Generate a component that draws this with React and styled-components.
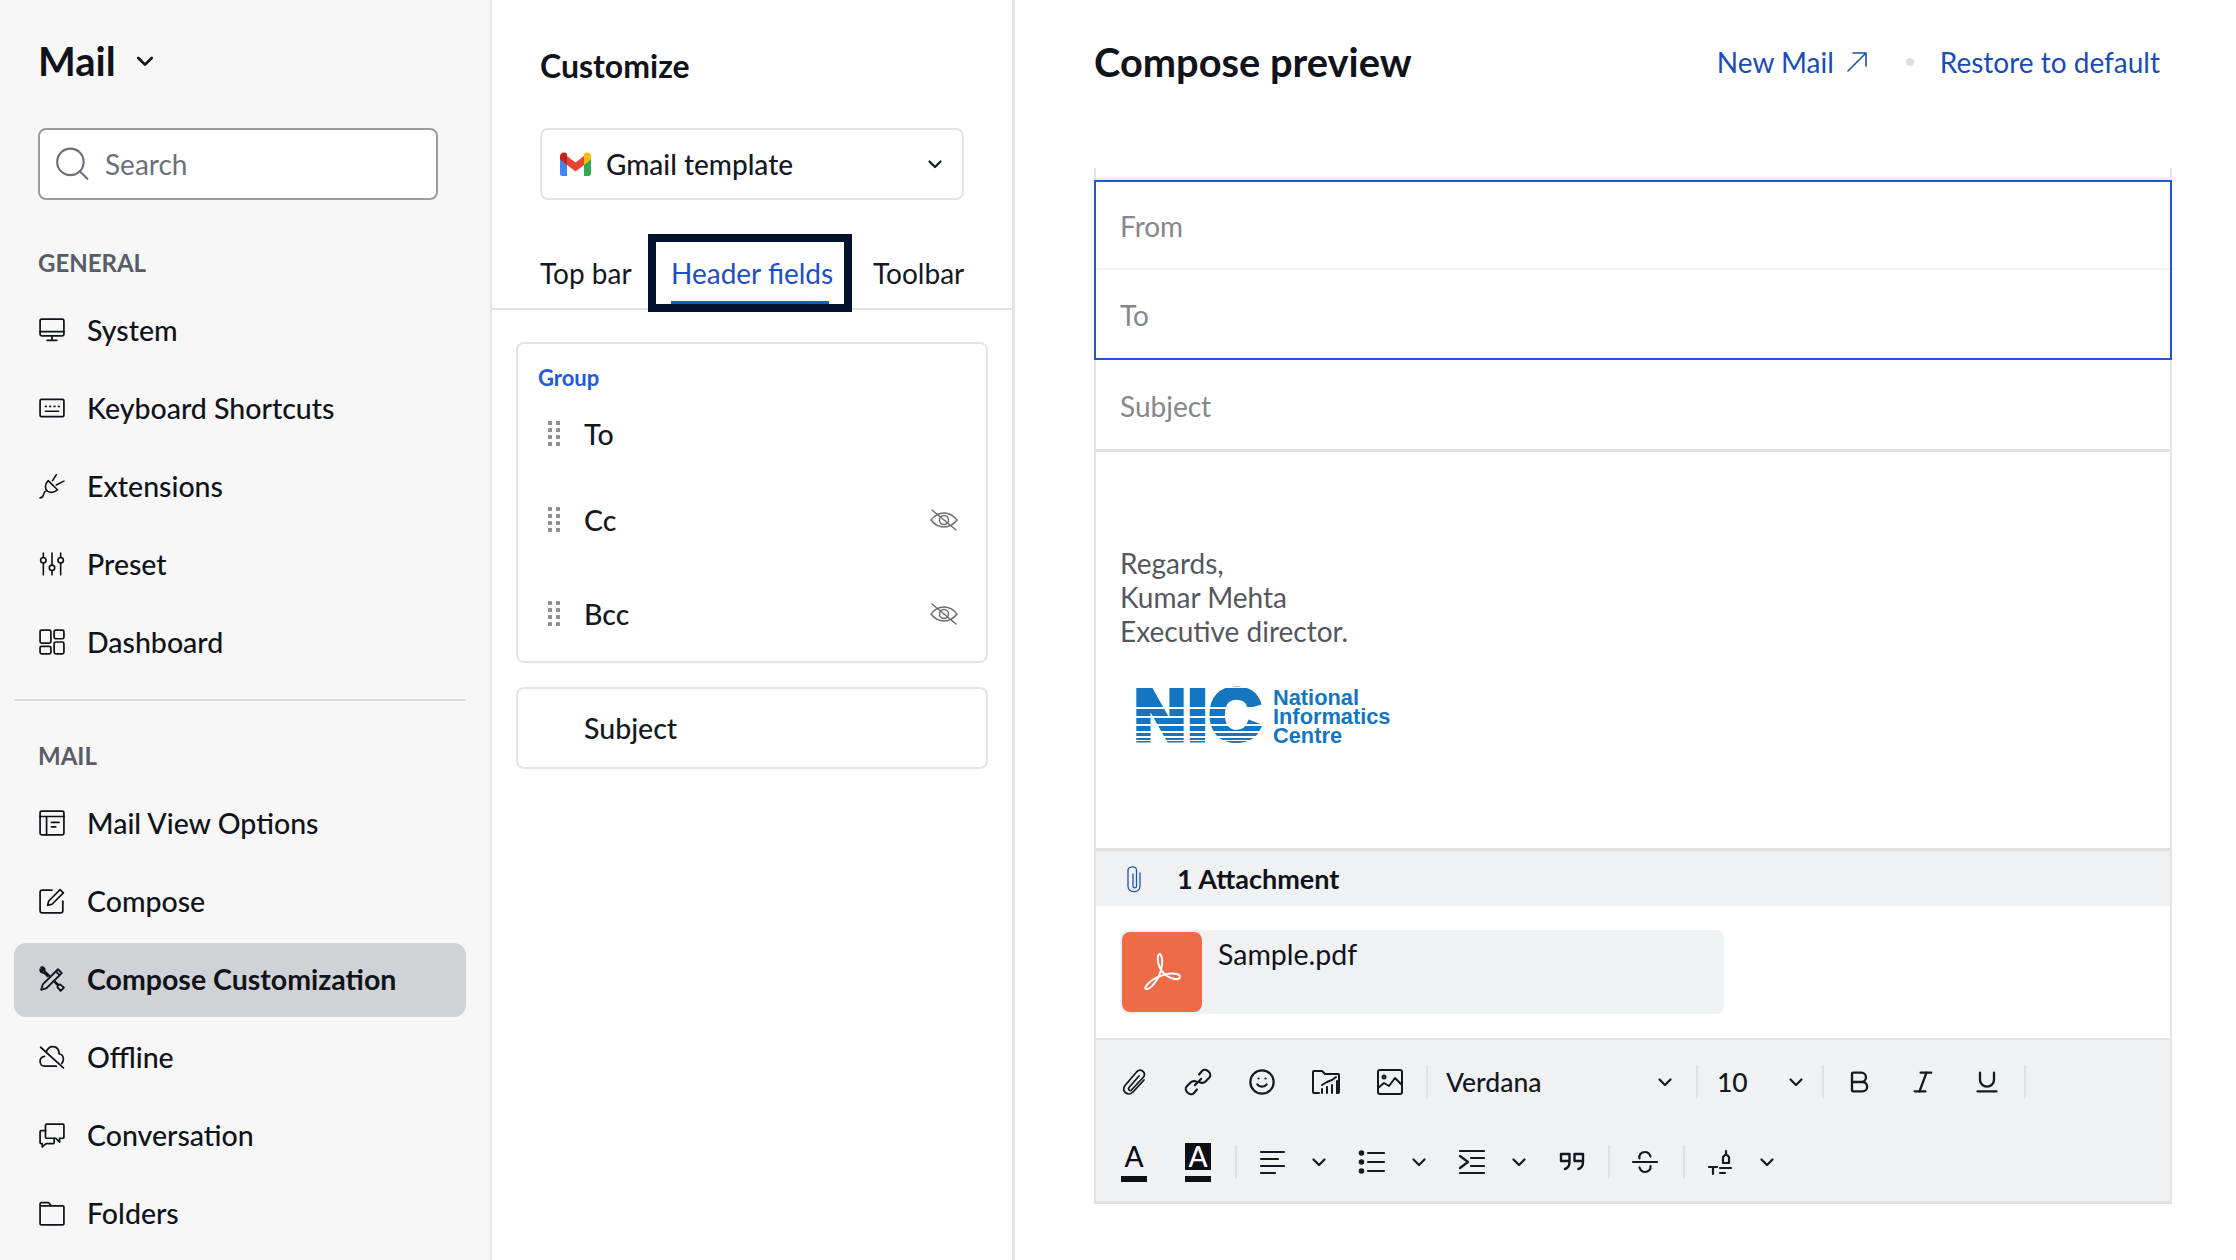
import React from 'react'
import styled, { createGlobalStyle } from 'styled-components'
import { Bold, Italic, Underline, Smile } from 'lucide-react'

const GlobalStyle = createGlobalStyle`
  html, body { margin: 0; padding: 0; background: #fff; }
  body { font-family: Lato, "Liberation Sans", sans-serif; color: #111318; }
  * { box-sizing: border-box; }
`

const Page = styled.div`
  display: flex;
  width: 2236px;
  height: 1260px;
  overflow: hidden;
`

/* ---------- sidebar ---------- */
const Sidebar = styled.aside`
  width: 492px;
  flex: none;
  background: #f7f7f7;
  border-right: 2px solid #e6e6e6;
`
const SideHead = styled.div`
  height: 128px;
  padding: 0 0 6px 38px;
  display: flex;
  align-items: center;
  gap: 18px;
`
const SideTitle = styled.h1`
  margin: 0;
  font-size: 40px;
  font-weight: 700;
  color: #10131a;
`
const SearchBox = styled.div`
  margin-left: 38px;
  width: 400px;
  height: 72px;
  background: #fff;
  border: 2px solid #9a9ca3;
  border-radius: 8px;
  display: flex;
  align-items: center;
  padding-left: 14px;
  gap: 15px;
  font-size: 28px;
  color: #6d7078;
`
const GroupLabel = styled.div`
  height: 30px;
  line-height: 30px;
  margin: ${p => p.$top}px 0 ${p => p.$bottom}px 38px;
  font-size: 24px;
  font-weight: 700;
  color: #585c66;
`
const NavList = styled.nav`
  display: flex;
  flex-direction: column;
  gap: 4px;
`
const NavItem = styled.div`
  height: 74px;
  margin: 0 24px 0 14px;
  padding: 0 0 2px 25px;
  display: flex;
  align-items: center;
  gap: 22px;
  border-radius: 12px;
  font-size: 28.5px;
  font-weight: ${p => (p.$active ? 700 : 500)};
  background: ${p => (p.$active ? '#d1d2d6' : 'transparent')};
  color: #10131a;
`
const SideRule = styled.hr`
  margin: 19px 24px 0 14px;
  border: 0;
  height: 2px;
  background: #dedede;
`

/* ---------- customize column ---------- */
const Customize = styled.section`
  width: 523px;
  flex: none;
  border-right: 3px solid #e4e4e4;
`
const CustomizeTitle = styled.h2`
  margin: 0;
  height: 128px;
  padding: 0 0 0 48px;
  line-height: 132px;
  font-size: 32px;
  font-weight: 700;
  color: #10131a;
`
const TemplateSelect = styled.div`
  margin-left: 48px;
  width: 424px;
  height: 72px;
  border: 2px solid #e4e4e4;
  border-radius: 8px;
  display: flex;
  align-items: center;
  padding: 0 18px;
  gap: 15px;
  font-size: 28px;
  font-weight: 500;
  color: #15181f;
`
const Grow = styled.span`
  flex: 1;
`
const TabBar = styled.div`
  margin-top: 34px;
  height: 76px;
  padding-left: 48px;
  display: flex;
  align-items: flex-start;
  border-bottom: 2px solid #e2e2e2;
`
const PlainTab = styled.div`
  height: 74px;
  width: ${p => p.$w}px;
  flex: none;
  margin-left: ${p => p.$left || 0}px;
  line-height: 78px;
  font-size: 28px;
  white-space: nowrap;
  color: #15181f;
`
const FocusedTab = styled.div`
  height: 78px;
  width: 204px;
  flex: none;
  margin-left: 17px;
  border: 8px solid #03122f;
  padding: 0 15px;
  background: #fff;
  position: relative;
  z-index: 1;
`
const FocusedLabel = styled.div`
  height: 62px;
  line-height: 62px;
  font-size: 28px;
  white-space: nowrap;
  color: #1d4fc4;
  border-bottom: 3px solid #1d56d8;
`
const FieldCard = styled.div`
  margin: ${p => p.$top}px 0 0 24px;
  width: 472px;
  height: ${p => p.$height}px;
  border: 2px solid #e4e4e4;
  border-radius: 8px;
  padding: ${p => (p.$group ? '20px 20px 0' : '0 0 0 66px')};
  display: ${p => (p.$group ? 'block' : 'flex')};
  align-items: center;
  font-size: 28.5px;
  font-weight: 500;
  color: #15181f;
`
const CardLabel = styled.div`
  height: 28px;
  line-height: 28px;
  font-size: 22px;
  font-weight: 700;
  color: #1d5bd8;
`
const FieldRow = styled.div`
  height: 60px;
  margin-top: ${p => p.$top}px;
  padding: 0 8px 2px 10px;
  display: flex;
  align-items: center;
  gap: 24px;
`

/* ---------- preview column ---------- */
const Preview = styled.main`
  flex: 1;
  padding-left: 79px;
`
const PreviewHead = styled.header`
  height: 168px;
  width: 1066px;
  padding-bottom: 46px;
  display: flex;
  align-items: center;
`
const PreviewTitle = styled.h2`
  margin: 0;
  flex: 1;
  font-size: 39.8px;
  font-weight: 700;
  color: #10131a;
`
const HeadLink = styled.a`
  display: flex;
  align-items: center;
  gap: 12px;
  padding-top: 2px;
  font-size: 28px;
  color: #1a4cb8;
`
const HeadDot = styled.span`
  width: 8px;
  height: 8px;
  margin: 2px 26px 0 38px;
  border-radius: 50%;
  background: #dcdde0;
`
const ComposeFrame = styled.div`
  width: 1078px;
  border-right: 2px solid #e4e4e4;
  border-left: 2px solid #e4e4e4;
  border-bottom: 3px solid #e2e2e2;
`
const FrameStub = styled.div`
  height: 12px;
  margin: 0 -2px;
  border-bottom: 2px solid #ececec;
`
const FocusBox = styled.div`
  margin: 0 -2px;
  height: 180px;
  border: 2px solid #1e55d8;
`
const ComposeRow = styled.div`
  height: ${p => p.$height}px;
  padding: 2px 0 0 24px;
  display: flex;
  align-items: center;
  font-size: 28px;
  color: #85878c;
  border-bottom: ${p => p.$rule || 'none'};
`
const BodyArea = styled.div`
  height: 396px;
  padding: 94px 0 0 24px;
`
const Signature = styled.div`
  font-size: 28px;
  line-height: 34px;
  color: #54575e;
`
const LogoWrap = styled.div`
  margin: 39px 0 0 14px;
  display: flex;
  align-items: flex-start;
  gap: 9px;
  color: #1475c1;
`
const NicMark = styled.div`
  position: relative;
  width: 130px;
  height: 57px;
  font-family: "Liberation Sans", sans-serif;
  font-weight: 700;
  font-size: 72px;
  letter-spacing: 1.5px;
  line-height: 57px;
  color: #1475c1;
  -webkit-text-stroke: 5px #1475c1;
  white-space: nowrap;
  /* white bands over the letters, getting closer towards the bottom */
  &::after {
    content: '';
    position: absolute;
    inset: 0 -4px -2px -4px;
    background: linear-gradient(
      #fff 0 1px, transparent 1px 20px, #fff 20px 22px,
      transparent 22px 29px, #fff 29px 31px,
      transparent 31px 37px, #fff 37px 39px,
      transparent 39px 44px, #fff 44px 46px,
      transparent 46px 49px, #fff 49px 51px,
      transparent 51px 53px, #fff 53px 54px,
      transparent 54px 57px, #fff 57px
    );
  }
`
const LogoText = styled.div`
  font-family: "Liberation Sans", sans-serif;
  font-weight: 700;
  font-size: 21.8px;
  line-height: 19px;
  padding-top: 1px;
`
const AttachBar = styled.div`
  height: 58px;
  border-top: 3px solid #e0e0e0;
  background: #f0f1f3;
  padding-left: 30px;
  display: flex;
  align-items: center;
  gap: 35px;
  font-size: 27px;
  font-weight: 700;
  color: #10131a;
`
const AttachArea = styled.div`
  height: 134px;
  padding: 24px 0 0 24px;
  border-bottom: 2px solid #e4e4e4;
`
const FileCard = styled.div`
  width: 604px;
  height: 84px;
  padding: 2px;
  display: flex;
  gap: 16px;
  background: #f0f1f3;
  border-radius: 8px;
  font-size: 28.5px;
  line-height: 44px;
  color: #10131a;
`
const PdfTile = styled.div`
  width: 80px;
  height: 80px;
  flex: none;
  border-radius: 8px;
  background: #ee6b47;
`
const Toolbar = styled.div`
  height: 161px;
  background: #f0f1f3;
  padding: 2px 0 0 6px;
`
const ToolRow = styled.div`
  height: 80px;
  display: flex;
  align-items: center;
  color: #15181f;
`
const ToolCell = styled.div`
  width: ${p => p.$w || 64}px;
  flex: none;
  display: flex;
  align-items: center;
  justify-content: center;
`
const ToolSep = styled.div`
  width: 2px;
  height: 34px;
  margin: 0 ${p => p.$right || 0}px 0 ${p => p.$left || 0}px;
  flex: none;
  background: #e0e1e4;
`
const ToolSelect = styled.div`
  width: ${p => p.$w}px;
  padding: 0 ${p => p.$right}px 0 ${p => p.$left}px;
  flex: none;
  display: flex;
  align-items: center;
  justify-content: space-between;
  font-size: 26.5px;
  font-weight: 500;
  color: #15181f;
`
const DropGroup = styled.div`
  display: flex;
  align-items: center;
  margin-right: 6px;
`
const ColorGlyph = styled.div`
  width: 26px;
  display: flex;
  flex-direction: column;
  align-items: stretch;
  font-size: 28px;
  font-weight: 500;
  text-align: center;
`
const GlyphFace = styled.span`
  height: 27px;
  margin-bottom: 6px;
  line-height: 27px;
  background: ${p => (p.$filled ? '#0d0f14' : 'transparent')};
  color: ${p => (p.$filled ? '#fff' : '#0d0f14')};
`
const GlyphBar = styled.span`
  height: 6px;
  background: #0d0f14;
`

/* ---------- icons ---------- */
const Svg = ({ size = 26, w, h, box = '0 0 24 24', sw = 1.6, color = 'currentColor', children }) => (
  <svg width={w || size} height={h || size} viewBox={box} fill="none" stroke={color} strokeWidth={sw} strokeLinecap="round" strokeLinejoin="round" style={{ flex: 'none', display: 'block' }}>
    {children}
  </svg>
)

const ChevronIcon = ({ size = 18, sw = 2.2 }) => (
  <Svg size={size} box="0 0 18 18" sw={sw}><path d="M3.5 6.5 9 12l5.5-5.5" /></Svg>
)
const SearchIcon = () => (
  <Svg size={36} box="0 0 34 34" sw={2}><circle cx="15.5" cy="15" r="12.500" /><path d="m24.5 24 7 7" /></Svg>
)
const SystemIcon = () => (
  <Svg><rect x="1" y="2" width="22" height="15.5" rx="1.5" /><path d="M1 13.5h22M12 17.5v4M7.5 21.5h9" /></Svg>
)
const KeyboardIcon = () => (
  <Svg><rect x="1" y="4" width="22" height="16" rx="1.2" /><path d="M6 10.5h.6M10 10.5h.6M14 10.5h.6M18 10.5h.6M6 15h12" /></Svg>
)
const PlugIcon = () => (
  <Svg sw={1.5}><path d="M1 23c3 0 3-2 3.500-4 .3-1 1-2 2-2.500M8.500 7l8.500 8.500c-2.500 2.500-6.500 3-9 1.500C5 15 5.500 10 8.500 7ZM12.500 7 16 1.500M16 11 23 7.500" /></Svg>
)
const SlidersIcon = () => (
  <Svg sw={1.5}><path d="M4 2v4M4 11v11M12 2v11M12 18v4M20 2v4M20 11v11" /><circle cx="4" cy="8.500" r="2.500" /><circle cx="12" cy="15.500" r="2.500" /><circle cx="20" cy="8.500" r="2.500" /></Svg>
)
const DashboardIcon = () => (
  <Svg><rect x="1" y="1" width="10" height="12" rx="1.500" /><rect x="14" y="1" width="9" height="8" rx="1.500" /><rect x="1" y="16" width="10" height="7" rx="1.500" /><rect x="14" y="12" width="9" height="11" rx="1.500" /></Svg>
)
const ViewIcon = () => (
  <Svg><rect x="1" y="1" width="22" height="22" rx="1.500" /><path d="M1 6h22M7 6v17M11.500 11.500h7M11.500 15.500h4" /></Svg>
)
const ComposeIcon = () => (
  <Svg><path d="M12 2H3a2 2 0 0 0-2 2v17a2 2 0 0 0 2 2h17a2 2 0 0 0 2-2v-9" /><path d="m8 16 1-4L19.500 1.500l3 3L12 15l-4 1Z" /></Svg>
)
const ToolsIcon = () => (
  <Svg sw={1.7}>
    <path d="M3.500 17 17.500 3l3.500 3.500L7 20.500l-5 1.500 1.500-5ZM15.500 5l3.500 3.500" />
    <path d="M9.500 9 5 4.500c.8-1.800-.8-3.800-3-3.300l2 2-.8 1.300-2-1.500C.8 5 2.800 6.800 4.500 6L8 9.500M13.500 14l4 4-.5 1.500 3 3.500 3-3-3.500-3-1.500.5-4-4" />
  </Svg>
)
const OfflineIcon = () => (
  <Svg><path d="M7 6.500C8.500 3.500 11 2 13.500 2.500 17 3 18.500 6 18.500 9c2.500.5 4 2.500 4 5 0 1.500-.5 3-1.500 4M16 20.500H5C2.500 20.500 1 18.500 1 16c0-2.500 1.500-4 4-4.500" /><path d="m1.500 3 21 19" /></Svg>
)
const ChatIcon = () => (
  <Svg><path d="M7 2h15a1 1 0 0 1 1 1v11a1 1 0 0 1-1 1h-3v3.500L15.500 15H7a1 1 0 0 1-1-1V3a1 1 0 0 1 1-1Z" /><path d="M6 8H2a1 1 0 0 0-1 1v10a1 1 0 0 0 1 1h1v3l3.500-3H13a1 1 0 0 0 1-1v-4" /></Svg>
)
const FolderIcon = () => (
  <Svg><path d="M1 3.500a1 1 0 0 1 1-1h7l2.500 3H22a1 1 0 0 1 1 1V22a1 1 0 0 1-1 1H2a1 1 0 0 1-1-1V3.500ZM1 5.500h10.500" /></Svg>
)
const GmailIcon = () => (
  <svg width="31" height="24" viewBox="0 0 31 24" style={{ flex: 'none', display: 'block' }}>
    <path fill="#4285f4" d="M0 6v15.500A2.500 2.500 0 0 0 2.500 24H7V11L3 6Z" />
    <path fill="#34a853" d="M24 11v13h4.500a2.500 2.500 0 0 0 2.500-2.500V6l-3 0Z" />
    <path fill="#ea4335" d="M7 13V4l8.500 6.500L24 4v9l-8.500 6.500Z" />
    <path fill="#fbbc04" d="M24 3v10l7-5.500V4.500C31 1 27 -1 24 2Z" />
    <path fill="#c5221f" d="M0 7.500 7 13V3L7 2C4-1 0 1 0 4.500Z" />
  </svg>
)
const GripIcon = () => (
  <svg width="12" height="26" viewBox="0 0 12 26" fill="#8d8f96" style={{ flex: 'none', display: 'block' }}>
    {[0, 7, 14, 21].map(y => (
      <g key={y}><rect x="0" y={y} width="4" height="4" rx="0.500" /><rect x="8" y={y} width="4" height="4" rx="0.500" /></g>
    ))}
  </svg>
)
const EyeOffIcon = () => (
  <Svg w={28} h={24} box="0 0 28 24" sw={1.5} color="#6a6d75">
    <path d="M1 12c3.500-4.500 8-7 13-7s9.500 2.500 13 7c-3.500 4.500-8 7-13 7S4.500 16.500 1 12Z" />
    <circle cx="14" cy="12" r="4.500" />
    <path d="M2 2l24 20" />
  </Svg>
)
const ArrowOutIcon = () => (
  <Svg size={22} box="0 0 22 22" sw={1.6}><path d="M2 20 20 2M7 2h13v13" /></Svg>
)
const ClipBlueIcon = () => (
  <Svg w={16} h={28} box="0 0 16 28" sw={1.3} color="#1d4fc4">
    <path d="M7 9v12c0 2.500 3.500 2.500 3.500 0V5c0-4.500-8.500-4-8.500 .5V21c0 7.500 12 7.500 12 0V8" />
  </Svg>
)
const AttachIcon = () => (
  <Svg size={30} box="0 0 30 30" sw={1.8}>
    <path d="M25 13 14 25c-4.500 5-12.500-1-8-6.500L18 4.500c3.500-3.500 10 1 6.500 5.500L12.500 23c-1.500 1.500-4-.5-2.500-2.500L20 9" />
  </Svg>
)
const LinkIcon = () => (
  <Svg size={32} box="0 0 30 30" sw={2}>
    <path d="m12 18 6-6M16 8l3-3.500c3.500-3.500 10 3 6.500 6.500L22 14.500c-2 2-5 1.500-6.500 0M14 22l-3 3.500c-3.500 3.500-10-3-6.500-6.500L8 15.500c2-2 5-1.500 6.500 0" />
  </Svg>
)
const ChartFolderIcon = () => (
  <Svg size={30} box="0 0 30 30" sw={2}>
    <path d="M8 26H3a1 1 0 0 1-1-1V5a1 1 0 0 1 1-1h8l3 3h13a1 1 0 0 1 1 1v17a1 1 0 0 1-1 1h-1" />
    <path d="M11 26v-4M16 26v-6M21 26v-8M26 26V14M11 18l5-3 5-2 4-3" />
  </Svg>
)
const ImageIcon = () => (
  <Svg size={30} box="0 0 30 30" sw={2}>
    <rect x="3" y="3" width="24" height="24" rx="2" />
    <circle cx="9" cy="10" r="1.500" />
    <path d="m3 21 6-5 5 3 6-8 7 7" />
  </Svg>
)
const AlignIcon = () => (
  <Svg size={28} box="0 0 28 28" sw={2.2}><path d="M3 4h23M3 11h17M3 18h23M3 25h14" /></Svg>
)
const ListIcon = () => (
  <Svg size={28} box="0 0 28 28" sw={2.2}>
    <path d="M10 5h16M10 14h16M10 23h16" />
    <circle cx="3.500" cy="5" r="1.700" fill="currentColor" />
    <circle cx="3.500" cy="14" r="1.700" fill="currentColor" />
    <circle cx="3.500" cy="23" r="1.700" fill="currentColor" />
  </Svg>
)
const IndentIcon = () => (
  <Svg size={28} box="0 0 28 28" sw={2.2}><path d="M2 3h24M2 25h24M13 10h13M13 18h13M2 8l8 6-8 6" /></Svg>
)
const QuoteIcon = () => (
  <Svg size={28} box="0 0 28 28" sw={2.4}>
    <path d="M3 6h8.500v8c0 3-1.500 6-4.500 7M3 6v7h8.500M16.500 6H25v8c0 3-1.500 6-4.500 7M16.500 6v7H25" />
  </Svg>
)
const StrikeIcon = () => (
  <Svg size={30} box="0 0 30 30" sw={2.2}>
    <path d="M3 15h24M20.500 9.500C19.500 6.500 17.500 5 15 5c-4 0-6.500 3-5.500 6.500M9.500 20.500C10.500 23.500 12.500 25 15 25c3.500 0 6-2.500 5.500-6" />
  </Svg>
)
const FormatIcon = () => (
  <Svg size={30} box="0 0 30 30" sw={2.200}>
    <path d="M3 20h8M7 20v7M14 21h11M14 26h5M17 16v-6l2-2h2l2 2v6ZM20 8V4" />
  </Svg>
)
const PdfIcon = () => (
  <svg width="80" height="80" viewBox="0 0 80 80" fill="none" stroke="#fff" strokeWidth="2" style={{ display: 'block' }}>
    <path d="M38 22c-3 0-3 8 0 14s9 10 15 11 6-4 2-5c-8-2-19 2-26 7-5 4-7 8-5 8 3 1 9-5 13-13 3-7 5-18 1-22Z" />
  </svg>
)

const generalItems = [
  { label: 'System', icon: <SystemIcon /> },
  { label: 'Keyboard Shortcuts', icon: <KeyboardIcon /> },
  { label: 'Extensions', icon: <PlugIcon /> },
  { label: 'Preset', icon: <SlidersIcon /> },
  { label: 'Dashboard', icon: <DashboardIcon /> },
]

const mailItems = [
  { label: 'Mail View Options', icon: <ViewIcon /> },
  { label: 'Compose', icon: <ComposeIcon /> },
  { label: 'Compose Customization', icon: <ToolsIcon />, active: true },
  { label: 'Offline', icon: <OfflineIcon /> },
  { label: 'Conversation', icon: <ChatIcon /> },
  { label: 'Folders', icon: <FolderIcon /> },
]

const NavGroup = ({ items }) => (
  <NavList>
    {items.map(item => (
      <NavItem key={item.label} $active={item.active}>
        {item.icon}
        {item.label}
      </NavItem>
    ))}
  </NavList>
)

const ToolDrop = ({ chevron = 30, children }) => (
  <DropGroup>
    <ToolCell>{children}</ToolCell>
    <ToolCell $w={chevron}><ChevronIcon /></ToolCell>
  </DropGroup>
)

const App = () => {
  return (
    <Page>
      <GlobalStyle />
      <Sidebar>
        <SideHead>
          <SideTitle>Mail</SideTitle>
          <ChevronIcon size={22} />
        </SideHead>
        <SearchBox>
          <SearchIcon />
          Search
        </SearchBox>
        <GroupLabel $top={48} $bottom={16}>GENERAL</GroupLabel>
        <NavGroup items={generalItems} />
        <SideRule />
        <GroupLabel $top={40} $bottom={16}>MAIL</GroupLabel>
        <NavGroup items={mailItems} />
      </Sidebar>

      <Customize>
        <CustomizeTitle>Customize</CustomizeTitle>
        <TemplateSelect>
          <GmailIcon />
          <Grow>Gmail template</Grow>
          <ChevronIcon />
        </TemplateSelect>
        <TabBar>
          <PlainTab $w={91}>Top bar</PlainTab>
          <FocusedTab><FocusedLabel>Header fields</FocusedLabel></FocusedTab>
          <PlainTab $left={21} $w={92}>Toolbar</PlainTab>
        </TabBar>
        <FieldCard $group $top={32} $height={321}>
          <CardLabel>Group</CardLabel>
          <FieldRow $top={13}><GripIcon /><Grow>To</Grow></FieldRow>
          <FieldRow $top={26}><GripIcon /><Grow>Cc</Grow><EyeOffIcon /></FieldRow>
          <FieldRow $top={34}><GripIcon /><Grow>Bcc</Grow><EyeOffIcon /></FieldRow>
        </FieldCard>
        <FieldCard $top={24} $height={82}>Subject</FieldCard>
      </Customize>

      <Preview>
        <PreviewHead>
          <PreviewTitle>Compose preview</PreviewTitle>
          <HeadLink>New Mail <ArrowOutIcon /></HeadLink>
          <HeadDot />
          <HeadLink>Restore to default</HeadLink>
        </PreviewHead>
        <ComposeFrame>
          <FrameStub />
          <FocusBox>
            <ComposeRow $height={88} $rule="2px solid #f4f4f4">From</ComposeRow>
            <ComposeRow $height={88}>To</ComposeRow>
          </FocusBox>
          <ComposeRow $height={92} $rule="3px solid #e3e3e3">Subject</ComposeRow>
          <BodyArea>
            <Signature>Regards,<br />Kumar Mehta<br />Executive director.</Signature>
            <LogoWrap>
              <NicMark>NIC</NicMark>
              <LogoText>National<br />Informatics<br />Centre</LogoText>
            </LogoWrap>
          </BodyArea>
          <AttachBar><ClipBlueIcon />1 Attachment</AttachBar>
          <AttachArea>
            <FileCard>
              <PdfTile><PdfIcon /></PdfTile>
              Sample.pdf
            </FileCard>
          </AttachArea>
          <Toolbar>
            <ToolRow>
              <ToolCell><AttachIcon /></ToolCell>
              <ToolCell><LinkIcon /></ToolCell>
              <ToolCell><Smile size={28} strokeWidth={1.9} /></ToolCell>
              <ToolCell><ChartFolderIcon /></ToolCell>
              <ToolCell><ImageIcon /></ToolCell>
              <ToolSep $left={4} />
              <ToolSelect $w={268} $left={18} $right={22}>Verdana <ChevronIcon /></ToolSelect>
              <ToolSep />
              <ToolSelect $w={124} $left={19} $right={17}>10 <ChevronIcon /></ToolSelect>
              <ToolSep $right={3} />
              <ToolCell><Bold size={28} strokeWidth={2} /></ToolCell>
              <ToolCell><Italic size={28} strokeWidth={2} /></ToolCell>
              <ToolCell><Underline size={28} strokeWidth={2} /></ToolCell>
              <ToolSep $left={5} />
            </ToolRow>
            <ToolRow>
              <ToolCell><ColorGlyph><GlyphFace>A</GlyphFace><GlyphBar /></ColorGlyph></ToolCell>
              <ToolCell><ColorGlyph><GlyphFace $filled>A</GlyphFace><GlyphBar /></ColorGlyph></ToolCell>
              <ToolSep $left={5} $right={3} />
              <ToolDrop><AlignIcon /></ToolDrop>
              <ToolDrop><ListIcon /></ToolDrop>
              <ToolDrop><IndentIcon /></ToolDrop>
              <ToolCell><QuoteIcon /></ToolCell>
              <ToolSep $left={4} $right={3} />
              <ToolCell><StrikeIcon /></ToolCell>
              <ToolSep $left={6} $right={4} />
              <ToolDrop chevron={28}><FormatIcon /></ToolDrop>
            </ToolRow>
          </Toolbar>
        </ComposeFrame>
      </Preview>
    </Page>
  )
}

export default App
